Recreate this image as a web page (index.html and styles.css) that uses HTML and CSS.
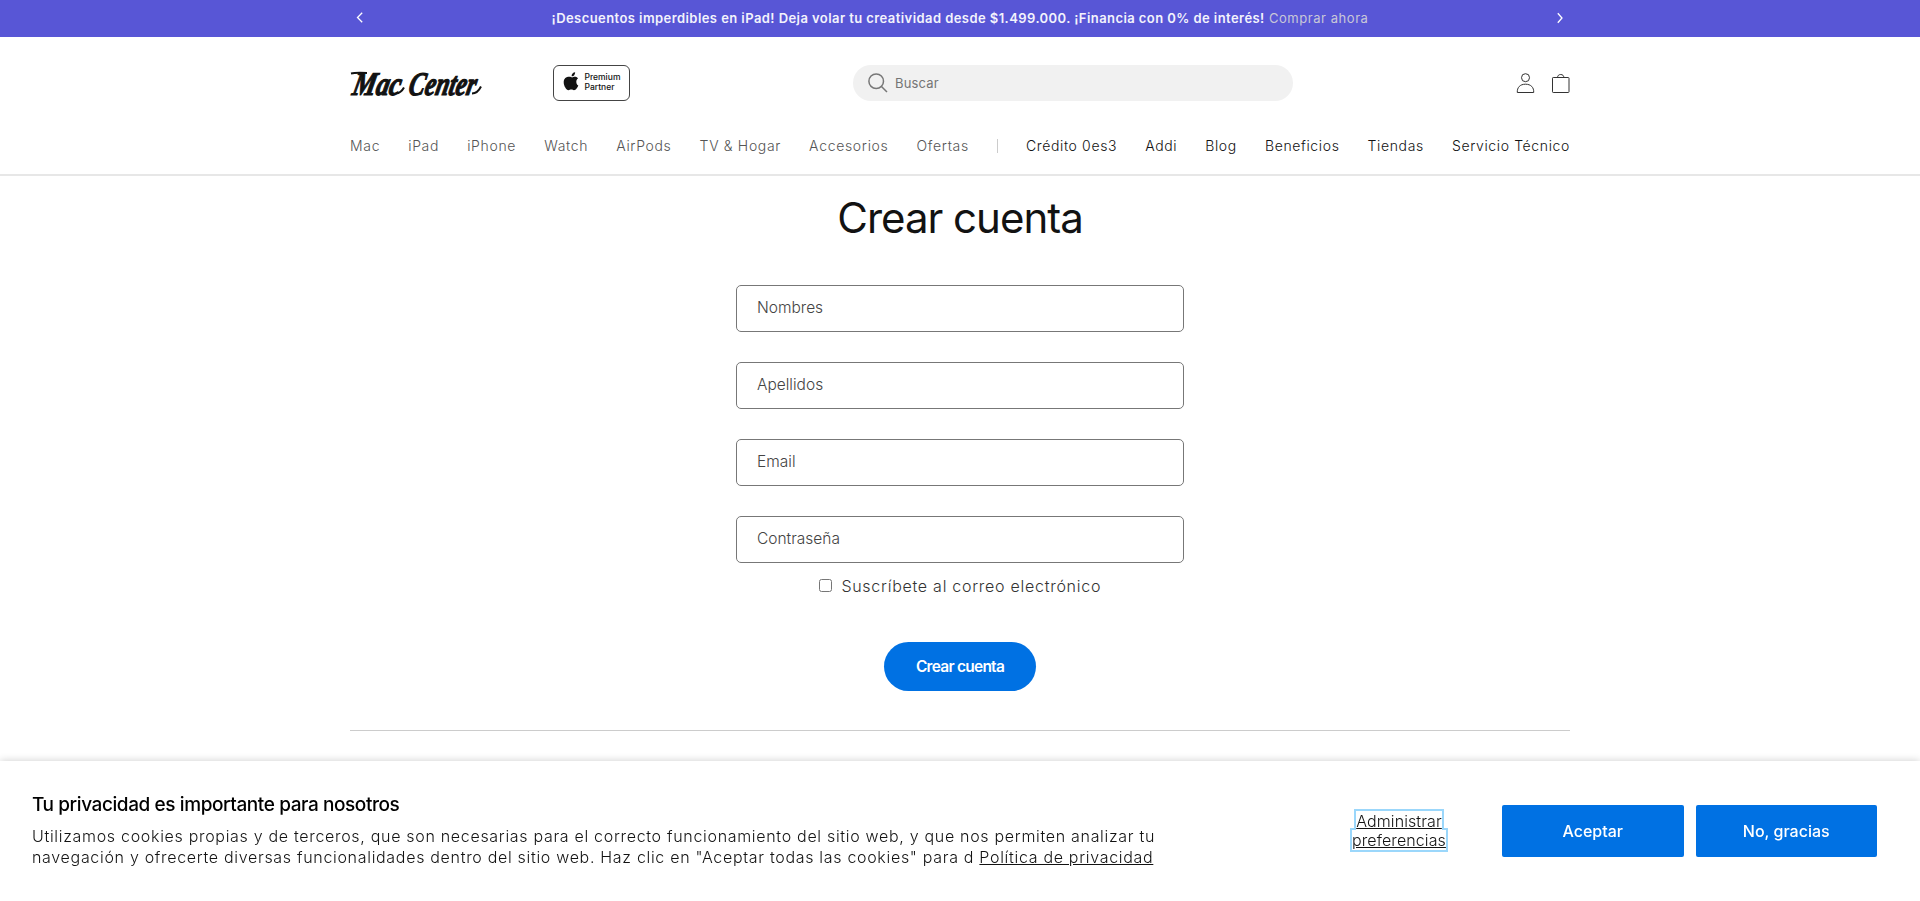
FILE: index.html
```html
<!DOCTYPE html>
<html lang="es">
<head>
<meta charset="utf-8">
<title>Crear cuenta – Mac Center</title>
<link rel="stylesheet" href="styles.css">
</head>
<body>
<div class="promo">
  <div class="promo-inner">
    <svg class="chev" viewBox="0 0 10 12"><path d="M7.2 .7 2.500 5.500l4.700 4.800"/></svg>
    <p class="promo-text"><b>¡Descuentos imperdibles en iPad! Deja volar tu creatividad desde $1.499.000. ¡Financia con 0% de interés!</b> <a>Comprar ahora</a></p>
    <svg class="chev next" viewBox="0 0 10 12"><path d="M2.800 1.200 7 6l-4.200 4.800"/></svg>
  </div>
</div>
<header class="header">
  <div class="top">
    <svg class="logo" viewBox="0 0 132 30"><g transform="skewX(-12)"><text x="7" y="26.500" textLength="48" lengthAdjust="spacingAndGlyphs">Mac</text><text x="63" y="26.500" textLength="67" lengthAdjust="spacingAndGlyphs">Center</text></g><path d="M1 5.500q4-1 16-.5M46 25.500q5-.5 8-6M122 25.500q5.500 0 9-7"/></svg>
    <div class="badge">
      <svg class="apple" viewBox="0 0 16 20"><path d="M13.300 10.500c0-2 1.600-3 1.700-3.100-.9-1.400-2.400-1.600-2.900-1.600-1.200-.1-2.400.7-3 .7-.6 0-1.600-.7-2.600-.7C3 5.800.7 7.600.7 11.300c0 3.700 2.700 7.900 4.800 7.900.9 0 1.600-.6 2.800-.6s1.700.6 2.700.6c2 0 3.600-2.900 4.300-4.700-1.300-.6-2-2-2-4zM11.200 4.300c.6-.8 1-1.900.9-3-1.900.1-3.700 1.900-3.500 4 1 .1 2-.4 2.600-1z"/></svg>
      <span>Premium<br>Partner</span>
    </div>
    <div class="search">
      <svg viewBox="0 0 20 20"><circle cx="8.200" cy="8.200" r="7.300"/><path d="m13.500 13.500 5.500 5.500"/></svg>
      <span>Buscar</span>
    </div>
    <div class="actions">
      <svg viewBox="0 0 20 22"><circle cx="10.500" cy="5.700" r="4"/><path d="M2.300 20.500c-.3-5 2.700-8.300 8.200-8.300s8.500 3.300 8.200 8.300z"/></svg>
      <svg viewBox="0 0 20 22"><rect x="2.500" y="5.500" width="16.500" height="15" rx=".7"/><path d="M7.500 5.500c.2-2 1.300-3 3.200-3s3 1 3.200 3"/></svg>
    </div>
  </div>
  <nav class="nav">
    <a>Mac</a><a>iPad</a><a>iPhone</a><a>Watch</a><a>AirPods</a><a>TV &amp; Hogar</a><a>Accesorios</a><a>Ofertas</a><i class="sep"></i><a class="dark">Crédito 0es3</a><a class="dark">Addi</a><a class="dark">Blog</a><a class="dark">Beneficios</a><a class="dark">Tiendas</a><a class="dark">Servicio Técnico</a>
  </nav>
</header>
<main class="main">
  <h1>Crear cuenta</h1>
  <form class="form">
    <div class="field"><span>Nombres</span></div>
    <div class="field"><span>Apellidos</span></div>
    <div class="field"><span>Email</span></div>
    <div class="field"><span>Contraseña</span></div>
    <label class="check"><input type="checkbox"><span>Suscríbete al correo electrónico</span></label>
    <button type="button" class="submit"><span>Crear cuenta</span></button>
  </form>
  <hr>
</main>
<section class="cookies">
  <div class="cookie-copy">
    <h2>Tu privacidad es importante para nosotros</h2>
    <p>Utilizamos cookies propias y de terceros, que son necesarias para el correcto funcionamiento del sitio web, y que nos permiten analizar tu<br>navegación y ofrecerte diversas funcionalidades dentro del sitio web. Haz clic en "Aceptar todas las cookies" para d <a>Política de privacidad</a></p>
  </div>
  <div class="prefs"><a>Administrar preferencias</a></div>
  <div class="cookie-buttons"><button type="button">Aceptar</button><button type="button">No, gracias</button></div>
</section>
</body>
</html>
```
FILE: styles.css
```css
* { box-sizing: border-box; }
body { margin: 0; height: 901px; overflow: hidden; display: flex; flex-direction: column; background: #fff; color: #121212; font-family: Inter, "Liberation Sans", sans-serif; font-weight: 300; }
h1, h2, p { margin: 0; }
button { border: 0; padding: 0 0 1px; font: inherit; color: #fff; background: #0071e3; }
.promo { height: 37px; background: #5856d6; color: #fff; }
.promo-inner { width: 1220px; height: 36px; margin: 0 auto; padding: 0 5px; display: flex; align-items: center; justify-content: space-between; }
.promo-text { font-size: 13px; letter-spacing: .55px; white-space: nowrap; }
.promo-text b { font-weight: 600; letter-spacing: .43px; color: #f3f3fc; }
.promo-text a { font-weight: 400; color: #c8c7d8; }
.chev { width: 10px; height: 12px; fill: none; stroke: #fff; stroke-width: 1.3; }
.header { height: 139px; border-bottom: 2px solid #e7e7e7; }
.top { width: 1220px; height: 35px; margin: 28px auto 0; display: flex; align-items: center; }
.logo { width: 132px; height: 30px; margin-right: 71px; overflow: visible; font: italic bold 33px "Liberation Serif", serif; fill: #121212; stroke: #121212; stroke-width: 1.2; }
.logo path { fill: none; stroke-width: 2; }
.badge { width: 77px; height: 36px; border: 1px solid #444; border-radius: 6px; display: flex; align-items: center; padding-left: 9px; gap: 5.500px; font-size: 8.500px; line-height: 9.500px; font-weight: 500; }
.apple { width: 16px; height: 20px; margin-top: -3px; fill: #121212; }
.search { width: 440px; height: 36px; margin-left: 223px; border-radius: 18px; background: #f1f1f1; display: flex; align-items: center; padding-left: 15px; gap: 7px; font-size: 13px; font-weight: 400; letter-spacing: .15px; color: #757575; }
.search svg { width: 20px; height: 20px; fill: none; stroke: #777; stroke-width: 1.500; }
.actions { margin-left: auto; display: flex; gap: 15px; }
.actions svg { width: 20px; height: 22px; fill: none; stroke: #333; stroke-width: 1; }
.nav { width: 1220px; margin: 36px auto 0; display: flex; justify-content: space-between; align-items: center; font-size: 14px; line-height: 20px; letter-spacing: .67px; color: #555; white-space: nowrap; }
.nav .dark { color: #121212; letter-spacing: .63px; }
.sep { width: 1px; height: 14px; background: #ccc; }
.main { width: 1220px; margin: 0 auto; }
h1 { margin-top: 16px; text-align: center; font-size: 42px; line-height: 52px; padding-bottom: 1px; letter-spacing: -1px; font-weight: 380; }
.form { width: 448px; margin: 40px auto 0; display: flex; flex-direction: column; }
.field { height: 47px; margin-bottom: 30px; border: 1px solid #777; border-radius: 5px; padding: 11px 20px; font-size: 15.500px; line-height: 22px; color: #444; }
.check { margin-top: -18px; display: flex; justify-content: center; align-items: center; gap: 9.500px; font-size: 16px; line-height: 22px; padding-bottom: 2px; letter-spacing: .73px; color: #333; }
.check input { width: 13px; height: 13px; margin: -1px 0 0; }
.submit { width: 152px; height: 49px; margin: 43px auto 0; border-radius: 25px; font-size: 15.500px; font-weight: 600; letter-spacing: -.75px; }
hr { margin: 39px 0 0; border: 0; height: 1px; background: #ccc; }
.cookies { position: fixed; left: 0; right: 0; bottom: 0; height: 140px; padding: 0 43px 0 32px; display: flex; align-items: center; background: #fff; box-shadow: 0 0 8px rgba(0,0,0,.2); }
.cookie-copy { width: 1320px; padding-bottom: 2px; white-space: nowrap; font-size: 16px; line-height: 21px; letter-spacing: .69px; }
.cookie-copy h2 { font-size: 19px; line-height: 24px; margin-bottom: 9px; letter-spacing: -.41px; font-weight: 500; color: #000; }
.cookie-copy a { text-decoration: underline; }
.prefs { width: 94px; text-align: center; font-size: 16px; line-height: 19px; letter-spacing: .1px; }
.prefs a { text-decoration: underline; outline: 2px solid #9bd7fb; }
.cookie-buttons { margin-left: auto; display: flex; gap: 12px; }
.cookie-buttons button { width: 181.500px; height: 52px; border-radius: 2px; font-size: 16px; font-weight: 500; }
```
